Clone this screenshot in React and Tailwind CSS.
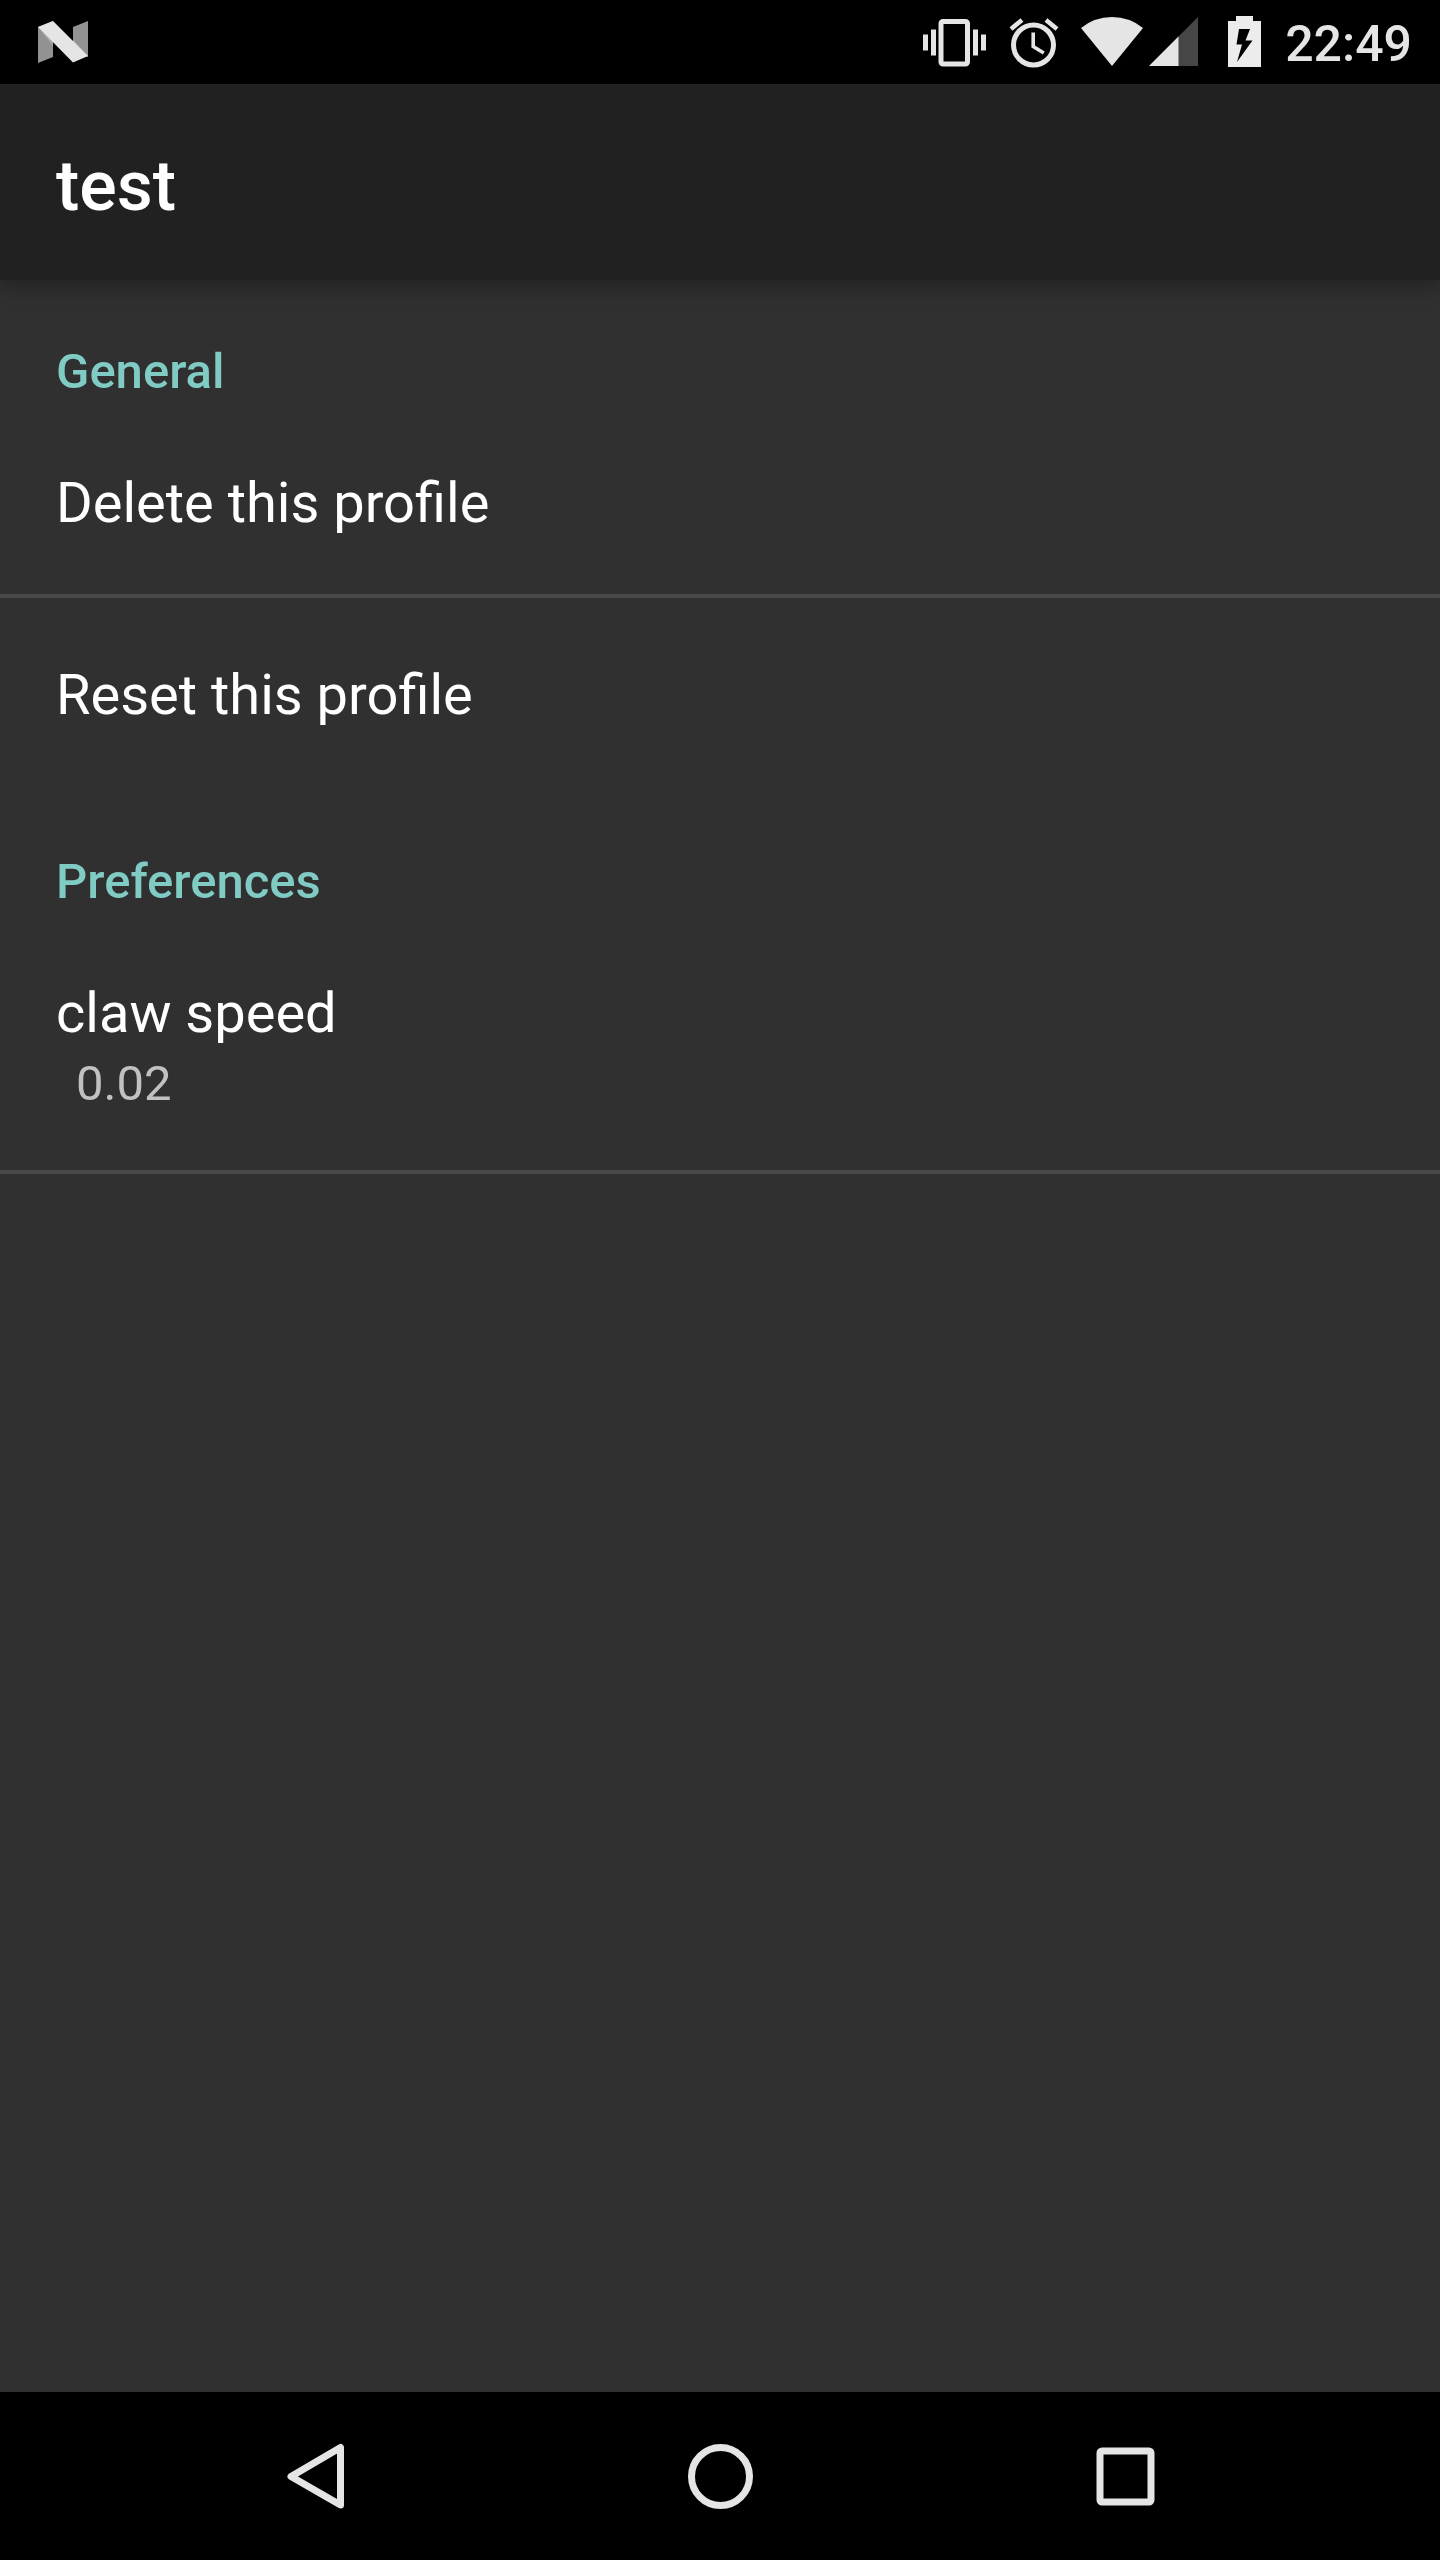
import React from "react";

function NougatIcon() {
  return (
    <svg viewBox="0 0 50 42" className="h-[42px] w-[50px]" role="img" aria-label="Android N">
      <path d="M0 6L15 0V36L0 42Z" fill="#929292" />
      <path d="M35 6L50 0V36L35 30Z" fill="#929292" />
      <path d="M0 6L15 21V25Z M50 36L35 18V24Z" fill="#a8a8a8" />
      <path d="M0 6L15 0L50 35L35 41.500Z" fill="#e5e5e5" />
    </svg>
  );
}

function VibrateIcon() {
  return (
    <svg viewBox="0 0 63 52" className="h-[52px] w-[63px]" fill="#e5e5e5" role="img" aria-label="Vibrate">
      <path d="M0 18.500h5v16H0z M8 13.500h5v26H8z M50 13.500h5v26h-5z M58 18.500h5v16h-5z" />
      <rect x="18" y="5.500" width="26.500" height="42.500" rx="2" fill="none" stroke="#e5e5e5" strokeWidth="5" />
    </svg>
  );
}

function AlarmIcon() {
  return (
    <svg viewBox="0 0 50 52" className="h-[52px] w-[50px]" fill="none" stroke="#e5e5e5" role="img" aria-label="Alarm">
      <circle cx="24.500" cy="29" r="20" strokeWidth="5" />
      <path d="M2 13L13 4 M37 4L48 13" strokeWidth="4.500" />
      <path d="M24.200 16.500V30.500L34.800 37" strokeWidth="3.600" />
    </svg>
  );
}

function WifiIcon() {
  return (
    <svg viewBox="0 0 62 52" className="h-[52px] w-[62px]" role="img" aria-label="Wi-Fi">
      <path d="M0 12Q13.500 1 31 1T62 12L31 50Z" fill="#e5e5e5" />
    </svg>
  );
}

function SignalIcon() {
  return (
    <svg viewBox="0 0 49 52" className="h-[52px] w-[49px]" role="img" aria-label="Mobile signal">
      <path d="M0 50L49 1V50Z" fill="#464646" />
      <path d="M0 50L29.500 20.500V50Z" fill="#e5e5e5" />
    </svg>
  );
}

function BatteryIcon() {
  return (
    <svg viewBox="0 0 33 52" className="h-[52px] w-[33px]" role="img" aria-label="Battery charging">
      <path d="M0 5H8V0H25V5H33V51H0Z" fill="#ececec" />
      <path d="M11 13H22L17.500 24.500H24.500L9 46L14 28.500H8.500Z" fill="#000" />
    </svg>
  );
}

function StatusBar() {
  return (
    <div className="flex h-[84px] shrink-0 items-center justify-between bg-black pr-7 pl-[38px]">
      <NougatIcon />
      <div className="flex items-center">
        <VibrateIcon />
        <div className="w-[23px]" />
        <AlarmIcon />
        <div className="w-[22px]" />
        <WifiIcon />
        <div className="w-[6px]" />
        <SignalIcon />
        <div className="w-[30px]" />
        <BatteryIcon />
        <time className="pt-1 pl-6 text-[50px] leading-[58px] font-medium text-[#e5e5e5]">22:49</time>
      </div>
    </div>
  );
}

function Category({ children }) {
  return <h2 className="px-14 text-[49px] leading-[60px] font-medium text-[#80cbc4]">{children}</h2>;
}

function Preference({ title, value, divider }) {
  return (
    <button
      type="button"
      className={
        "block w-full px-14 text-left " +
        (value ? "pb-14 " : "pb-[58px] ") +
        (divider ? "border-b-4 border-[#494949]" : "")
      }
    >
      <span className="block text-[56px] leading-[66px] text-white">{title}</span>
      {value && (
        <span className="mt-2 block pl-5 text-[49px] leading-[60px] text-[#c1c1c1]">{value}</span>
      )}
    </button>
  );
}

function NavBar() {
  return (
    <nav className="flex h-[168px] shrink-0 bg-black px-28">
      <button type="button" aria-label="Back" className="flex flex-1 items-center justify-center">
        <svg viewBox="0 0 66 66" className="size-[66px]" fill="none" stroke="#e5e5e5" strokeWidth="7" strokeLinejoin="round">
          <path d="M9 33.500L58.500 4.500V62Z" />
        </svg>
      </button>
      <button type="button" aria-label="Home" className="flex flex-1 items-center justify-center">
        <svg viewBox="0 0 66 66" className="size-[66px]" fill="none" stroke="#e5e5e5" strokeWidth="7">
          <circle cx="33.500" cy="33.500" r="29" />
        </svg>
      </button>
      <button type="button" aria-label="Recent apps" className="flex flex-1 items-center justify-center">
        <svg viewBox="0 0 66 66" className="size-[66px]" fill="none" stroke="#e5e5e5" strokeWidth="7">
          <rect x="8" y="8" width="51" height="51" rx="2" />
        </svg>
      </button>
    </nav>
  );
}

export default function App() {
  return (
    <div className="flex min-h-screen flex-col bg-[#303030] font-[Roboto,sans-serif]">
      <StatusBar />
      <header className="flex h-[196px] shrink-0 items-center bg-[#212121] px-14 pt-2 shadow-[0_8px_18px_rgba(0,0,0,0.25)]">
        <h1 className="text-[70px] leading-[82px] font-medium text-white">test</h1>
      </header>
      <main className="grow">
        <section className="pt-[62px]">
          <Category>General</Category>
          <div className="pt-[68px]">
            <Preference title="Delete this profile" divider />
          </div>
          <div className="pt-16">
            <Preference title="Reset this profile" />
          </div>
        </section>
        <section className="pt-[66px]">
          <Category>Preferences</Category>
          <div className="pt-[68px]">
            <Preference title="claw speed" value="0.02" divider />
          </div>
        </section>
      </main>
      <NavBar />
    </div>
  );
}
